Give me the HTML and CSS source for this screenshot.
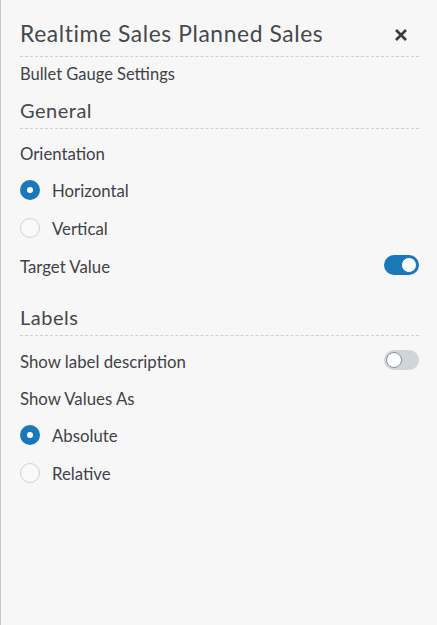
FILE: index.html
```html
<!DOCTYPE html>
<html>
<head>
<meta charset="utf-8">
<link rel="stylesheet" href="styles.css">
</head>
<body>
<div class="panel">
  <div class="header">
    <h1 class="title">Realtime Sales Planned Sales</h1>
    <button class="close" aria-label="Close">
      <svg width="14" height="14" viewBox="0 0 14 14"><path d="M2 2 L12 12 M12 2 L2 12" stroke="#3a3a3a" stroke-width="2.6" stroke-linecap="butt"/></svg>
    </button>
  </div>
  <div class="subtitle">Bullet Gauge Settings</div>

  <h2 class="section">General</h2>
  <div class="row label-row">Orientation</div>
  <div class="row"><span class="radio checked"></span><span class="opt">Horizontal</span></div>
  <div class="row"><span class="radio"></span><span class="opt">Vertical</span></div>
  <div class="row between"><span>Target Value</span><span class="toggle on"><span class="knob"></span></span></div>

  <h2 class="section second">Labels</h2>
  <div class="row between"><span>Show label description</span><span class="toggle"><span class="knob"></span></span></div>
  <div class="row label-row">Show Values As</div>
  <div class="row"><span class="radio checked"></span><span class="opt">Absolute</span></div>
  <div class="row"><span class="radio"></span><span class="opt">Relative</span></div>
</div>
</body>
</html>
```
FILE: styles.css
```css
html, body {
  margin: 0;
  padding: 0;
  height: 100%;
}
body {
  background: #f7f7f7;
  font-family: Lato, "Liberation Sans", sans-serif;
  color: #3f4246;
}
.panel {
  box-sizing: border-box;
  height: 100%;
  border-left: 1px solid #c9c9c9;
  padding: 0 18px 0 19px;
}
.header {
  display: flex;
  align-items: center;
  justify-content: space-between;
  padding: 20px 0 10px;
  border-bottom: 1px dashed #cfcfcf;
}
.title {
  margin: 0;
  font-size: 22.8px;
  line-height: 26px;
  font-weight: 400;
  letter-spacing: 0.6px;
  color: #45484c;
}
.close {
  border: 0;
  background: none;
  padding: 0;
  margin: 4px 11px 0 0;
  width: 14px;
  height: 14px;
  display: flex;
}
.subtitle {
  margin-top: 7px;
  font-size: 16.5px;
  line-height: 20px;
}
.section {
  margin: 14px 0 0;
  padding-bottom: 6px;
  font-size: 20px;
  line-height: 24px;
  font-weight: 400;
  letter-spacing: 0.5px;
  border-bottom: 1px dashed #cfcfcf;
  color: #45484c;
}
.section.second {
  margin-top: 20px;
}
.section + .row {
  margin-top: 6px;
}
.row {
  display: flex;
  align-items: center;
  height: 38px;
  font-size: 16.8px;
}
.row.label-row {
  height: 36px;
}
.row.between {
  justify-content: space-between;
}
.radio {
  box-sizing: border-box;
  width: 20px;
  height: 20px;
  border-radius: 50%;
  border: 1px solid #d2d2d2;
  background: #f9f9f9;
  margin-right: 12px;
  flex: none;
}
.radio.checked {
  border: 7px solid #1878b9;
  background: #fff;
}
.toggle {
  position: relative;
  box-sizing: border-box;
  width: 35px;
  height: 20px;
  margin-bottom: 2px;
  border-radius: 10px;
  background: #d0d5db;
  flex: none;
}
.toggle .knob {
  position: absolute;
  top: 2px;
  left: 2px;
  box-sizing: border-box;
  width: 16px;
  height: 16px;
  border-radius: 50%;
  background: #fff;
  border: 1px solid #8e9297;
}
.toggle.on {
  background: #1878b9;
}
.toggle.on .knob {
  left: 17px;
  border: 1px solid #1878b9;
}
```
